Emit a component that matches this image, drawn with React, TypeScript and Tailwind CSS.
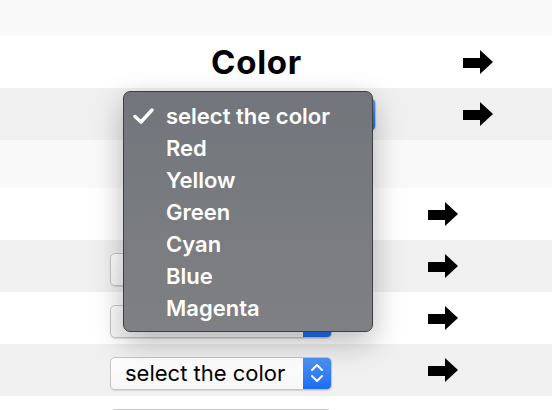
import React from "react";

const font = { fontFamily: "Inter, 'Liberation Sans', sans-serif" };

function Arrow() {
  return (
    <svg width="30" height="24" viewBox="0 0 30 24" className="block">
      <rect x="0" y="8" width="18" height="10" fill="#000" />
      <polygon points="17,0 30,12 17,24" fill="#000" />
    </svg>
  );
}

function Select() {
  return (
    <div className="flex h-[33px] w-[222px] rounded-[5px] border border-[#c6c6c6] bg-gradient-to-b from-white to-[#f6f6f6] shadow-[0_1px_1px_rgba(0,0,0,0.12)] overflow-hidden">
      <div className="flex-1 flex items-center pl-[14px] text-[22px] text-black leading-none">
        select the color
      </div>
      <div className="w-[28px] bg-gradient-to-b from-[#4d93f7] to-[#1a6cf0] flex items-center justify-center">
        <svg width="14" height="20" viewBox="0 0 14 20" fill="none" stroke="#fff" strokeWidth="2" strokeLinecap="round" strokeLinejoin="round">
          <polyline points="2,7 7,2 12,7" />
          <polyline points="2,13 7,18 12,13" />
        </svg>
      </div>
    </div>
  );
}

function Row1({ bg, children }: { bg: string; children?: React.ReactNode }) {
  return (
    <div className={`h-[52px] flex items-center ${bg}`}>
      <div className="w-[154px]" />
      <div className="w-[222px] flex items-center">{children}</div>
      <div className="ml-[87px]">
        <Arrow />
      </div>
    </div>
  );
}

function Row2({ bg, children }: { bg: string; children?: React.ReactNode }) {
  return (
    <div className={`h-[52px] flex items-center ${bg}`}>
      <div className="w-[110px]" />
      <div className="w-[222px] flex items-center mt-[6px]">{children}</div>
      <div className="ml-[96px]">
        <Arrow />
      </div>
    </div>
  );
}

const items = ["select the color", "Red", "Yellow", "Green", "Cyan", "Blue", "Magenta"];

export default function App() {
  return (
    <div className="relative w-[552px] h-[410px] overflow-hidden bg-[#f9f9f9]" style={font}>
      <div className="h-[36px]" />
      <Row1 bg="bg-white">
        <div className="w-full text-center pr-[17px] text-[33px] tracking-[0.7px] font-bold text-black leading-none">Color</div>
      </Row1>
      <Row1 bg="bg-[#f0f0f0]">
        <Select />
      </Row1>
      <div className="h-[48px]" />
      <Row2 bg="bg-white" />
      <Row2 bg="bg-[#f0f0f0]">
        <Select />
      </Row2>
      <Row2 bg="bg-white">
        <Select />
      </Row2>
      <Row2 bg="bg-[#f0f0f0]">
        <Select />
      </Row2>
      <Row2 bg="bg-white">
        <Select />
      </Row2>

      {/* popup menu */}
      <div className="absolute left-[123px] top-[91px] w-[250px] h-[241px] rounded-[7px] border border-[#3f3f42] bg-gradient-to-b from-[#72767c] to-[#7f8083] shadow-[0_10px_30px_rgba(0,0,0,0.28)] pt-[8px]">
        {items.map((t, i) => (
          <div key={t} className="h-[32px] flex items-center">
            <div className="w-[42px] flex justify-start pl-[9px]">
              {i === 0 && (
                <svg width="21" height="16" viewBox="0 0 21 16" fill="none" stroke="#fff" strokeWidth="3.4" strokeLinecap="round" strokeLinejoin="round">
                  <polyline points="2,8.5 8,14 19,2" />
                </svg>
              )}
            </div>
            <div className="text-[22px] font-semibold text-white leading-none">{t}</div>
          </div>
        ))}
      </div>
    </div>
  );
}
